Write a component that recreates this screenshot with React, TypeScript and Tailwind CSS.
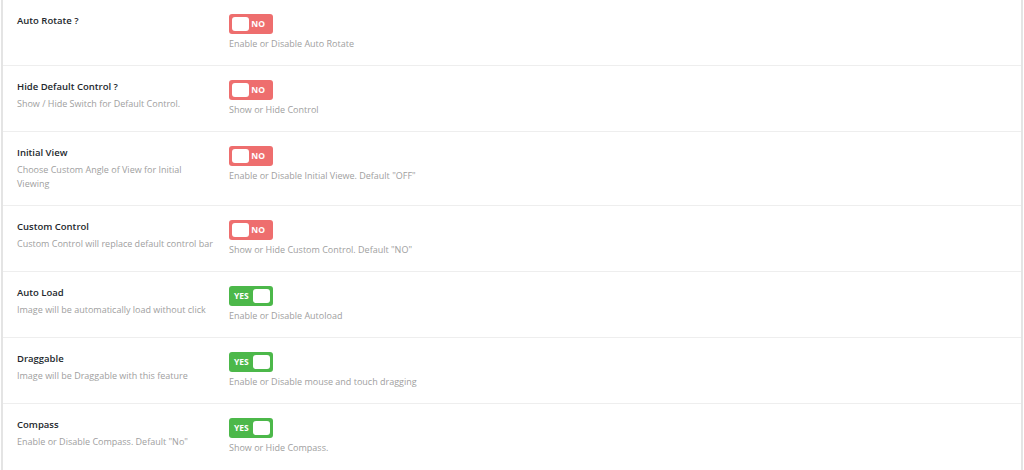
const settings = [
  { title: "Auto Rotate ?", sub: "", on: false, desc: "Enable or Disable Auto Rotate" },
  { title: "Hide Default Control ?", sub: "Show / Hide Switch for Default Control.", on: false, desc: "Show or Hide Control" },
  { title: "Initial View", sub: "Choose Custom Angle of View for Initial Viewing", on: false, desc: 'Enable or Disable Initial Viewe. Default "OFF"' },
  { title: "Custom Control", sub: "Custom Control will replace default control bar", on: false, desc: 'Show or Hide Custom Control. Default "NO"' },
  { title: "Auto Load", sub: "Image will be automatically load without click", on: true, desc: "Enable or Disable Autoload" },
  { title: "Draggable", sub: "Image will be Draggable with this feature", on: true, desc: "Enable or Disable mouse and touch dragging" },
  { title: "Compass", sub: 'Enable or Disable Compass. Default "No"', on: true, desc: "Show or Hide Compass." },
];

function Toggle({ on }: { on: boolean }) {
  if (on) {
    return (
      <div className="flex h-[20px] w-[44px] items-center justify-between rounded-[3px] bg-[#4cb84a] pl-[5px] pr-[3px]">
        <span className="text-[8.5px] font-bold leading-none text-white">YES</span>
        <span className="h-[14px] w-[17px] rounded-[3px] bg-white" />
      </div>
    );
  }
  return (
    <div className="flex h-[20px] w-[44px] items-center justify-between rounded-[3px] bg-[#ee6e6e] pl-[3px] pr-[8px]">
      <span className="h-[14px] w-[17px] rounded-[3px] bg-white" />
      <span className="text-[8.5px] font-bold leading-none text-white">NO</span>
    </div>
  );
}

export default function App() {
  return (
    <div className="h-[470px] w-[1024px] overflow-hidden bg-white px-[1px] font-['Open_Sans',sans-serif]">
      <div className="h-full border-x-2 border-[#e4e4e4]">
        {settings.map((s, i) => (
          <div key={i} className="flex border-b border-[#eeeeee] pt-[14px] pb-[14px] last:border-b-0">
            <div className="w-[226px] shrink-0 pl-[14px] pr-[15px]">
              <p className="text-[9.5px] font-semibold leading-[13px] text-[#23282d]">{s.title}</p>
              {s.sub && (
                <p className="mt-[4px] text-[9px] leading-[14px] text-[#a0a0a0]">{s.sub}</p>
              )}
            </div>
            <div className="flex flex-col">
              <Toggle on={s.on} />
              <p className="mt-[3px] text-[9px] leading-[14px] text-[#a0a0a0]">{s.desc}</p>
            </div>
          </div>
        ))}
      </div>
    </div>
  );
}
